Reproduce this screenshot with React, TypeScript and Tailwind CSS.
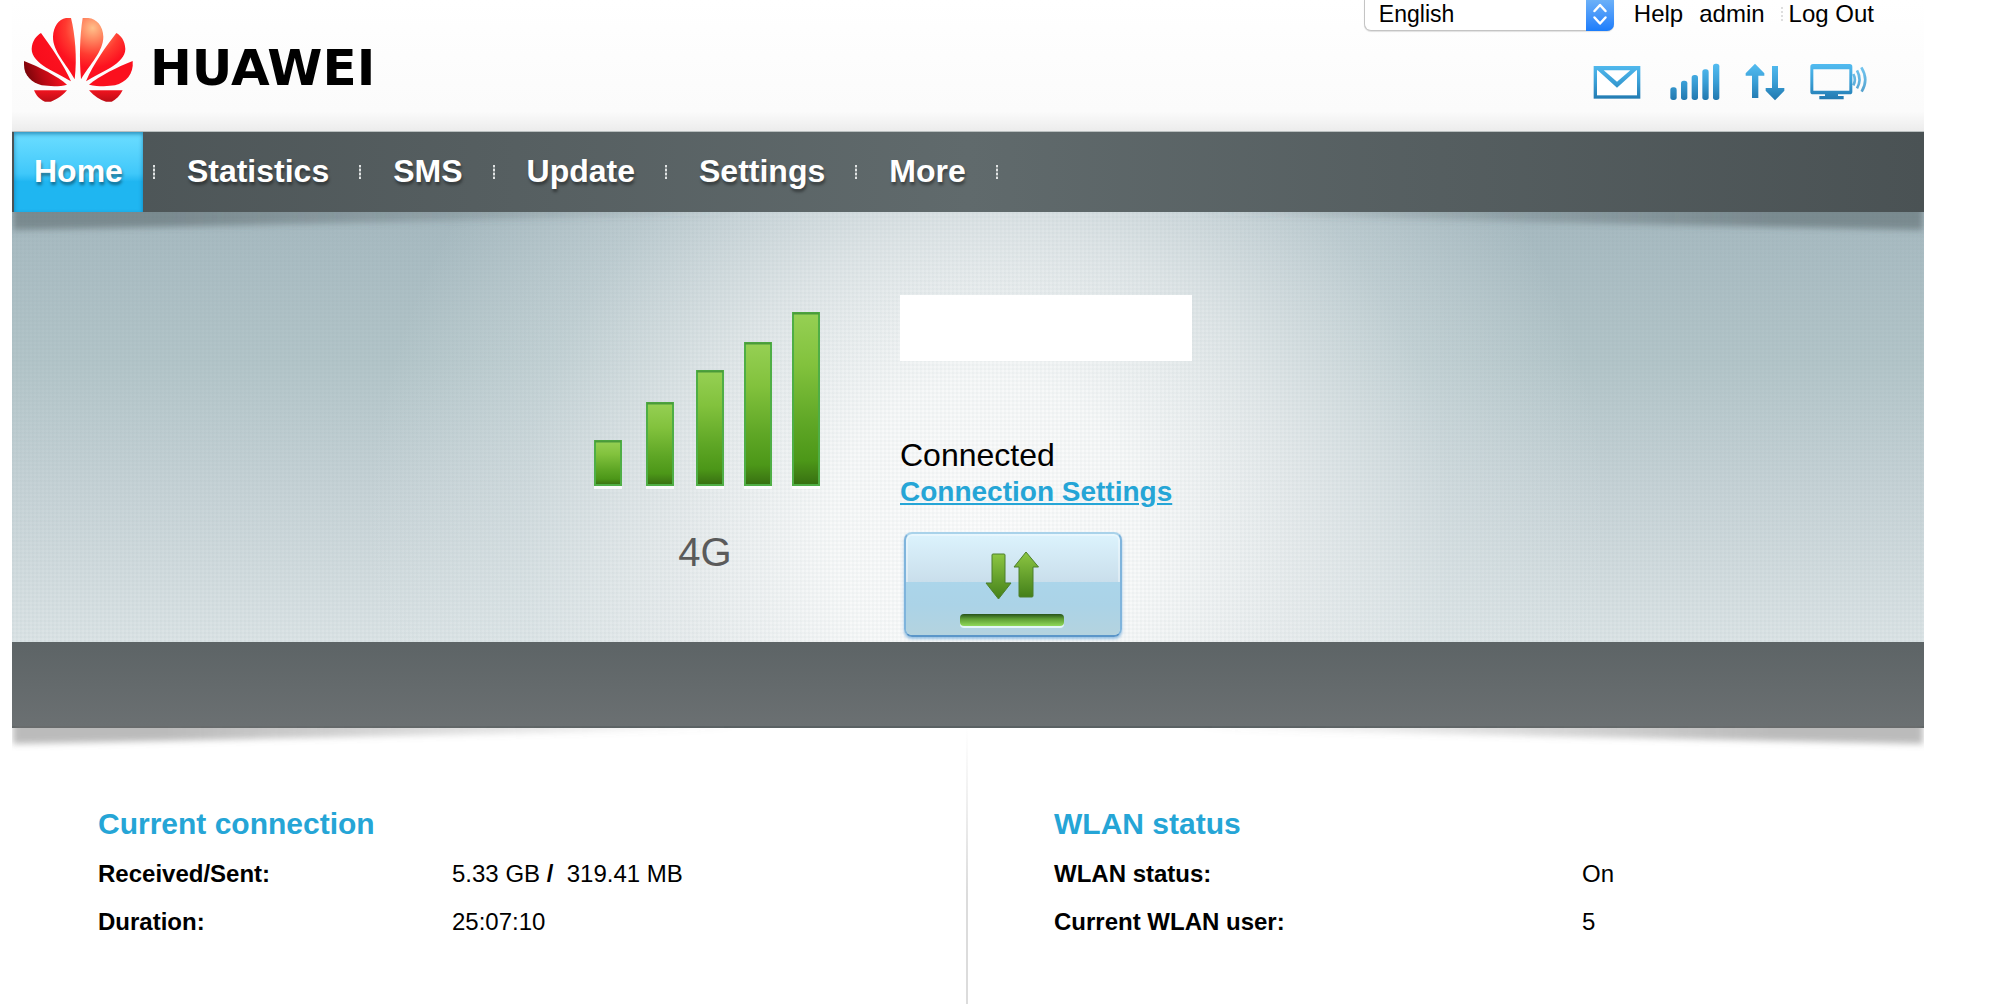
import { useState } from 'react'
import type { ReactNode } from 'react'

const TABS = ['Home', 'Statistics', 'SMS', 'Update', 'Settings', 'More']

const LANGUAGES = ['English', 'Deutsch', 'Español', 'Français', 'Italiano']

const SIGNAL_BARS = [
  { x: 0, top: 128 },
  { x: 52, top: 90 },
  { x: 102, top: 58 },
  { x: 150, top: 30 },
  { x: 198, top: 0 },
]

interface StatusRow {
  label: string
  value: ReactNode
}

const CONNECTION_ROWS: StatusRow[] = [
  { label: 'Received/Sent:', value: <>5.33 GB <b>/&nbsp;</b> 319.41 MB</> },
  { label: 'Duration:', value: '25:07:10' },
]

const WLAN_ROWS: StatusRow[] = [
  { label: 'WLAN status:', value: 'On' },
  { label: 'Current WLAN user:', value: '5' },
]

function Logo() {
  return (
    <div className="flex items-start pl-3 pt-[18px]">
      <svg width="112" height="86" viewBox="12 12 336 258" aria-hidden="true">
        <defs>
          <radialGradient id="petals" gradientUnits="userSpaceOnUse" cx="218" cy="42" r="240">
            <stop offset="0" stopColor="#ffc08a" />
            <stop offset="0.14" stopColor="#ff8a63" />
            <stop offset="0.34" stopColor="#ff3a30" />
            <stop offset="0.5" stopColor="#fd1220" />
            <stop offset="0.8" stopColor="#f80d1c" />
            <stop offset="1" stopColor="#c90d18" />
          </radialGradient>
          <linearGradient id="petalDark" gradientUnits="userSpaceOnUse" x1="20" y1="215" x2="120" y2="180">
            <stop offset="0" stopColor="#6d0408" />
            <stop offset="0.5" stopColor="#b60913" />
            <stop offset="1" stopColor="#f0101d" />
          </linearGradient>
          <linearGradient id="petalLow" x1="0" y1="0" x2="0" y2="1">
            <stop offset="0" stopColor="#f0141f" />
            <stop offset="1" stopColor="#bd0d16" />
          </linearGradient>
        </defs>
        <g fill="url(#petals)">
          <path d="M138 12H153C165 60 172 130 164 196C140 150 98 112 99 68C100 38 116 16 138 12Z" />
          <path d="M188 12C179 70 178 130 183 196C210 150 250 112 250 68C249 36 230 14 205 12Z" />
          <path d="M63 57C92 97 130 150 153 202C110 175 35 150 35 105C36 80 50 65 63 57Z" />
          <path d="M289 57C258 97 220 150 198 202C240 175 316 150 316 105C315 80 303 65 289 57Z" />
        </g>
        <path fill="url(#petalDark)" d="M12 141C60 160 110 185 141 212C120 218 90 217 65 214C35 205 12 185 12 152Z" />
        <path fill="#fb101e" d="M338 141C290 160 240 185 207 212C235 218 265 217 285 214C318 205 342 180 338 141Z" />
        <path fill="url(#petalLow)" d="M42 229H141C125 248 105 258 92 263H75C58 256 48 244 42 229Z" />
        <path fill="url(#petalLow)" d="M207 229H308C300 245 288 257 275 263H258C240 258 222 246 207 229Z" />
      </svg>
      <span className="ml-[14px] mt-[22px] font-['DejaVu_Sans',sans-serif] text-[50px] leading-14 font-bold text-black">HUAWEI</span>
    </div>
  )
}

function StatusIcons() {
  return (
    <div className="mt-8 flex items-center justify-end gap-6 pr-[5px]">
      <svg className="mr-1" width="48" height="38" viewBox="24 24 144 114" role="img" aria-label="Messages">
        <defs>
          <linearGradient id="iconBlue" gradientUnits="userSpaceOnUse" x1="0" y1="28" x2="0" y2="134">
            <stop offset="0" stopColor="#52bbf0" />
            <stop offset="0.5" stopColor="#3a9fd6" />
            <stop offset="1" stopColor="#2179b0" />
          </linearGradient>
        </defs>
        <rect x="31" y="38" width="130" height="88" fill="#fff" stroke="url(#iconBlue)" strokeWidth="10" />
        <path d="M32 36H160V46H154L96 98L38 46H32Z" fill="url(#iconBlue)" />
        <path d="M56 46H136L96 80Z" fill="#fff" />
      </svg>
      <svg width="52" height="38" viewBox="256 24 156 114" role="img" aria-label="Signal strength">
        <g fill="url(#iconBlue)">
          <rect x="260" y="97" width="19" height="38" rx="8" />
          <rect x="292" y="77" width="19" height="58" rx="8" />
          <rect x="324" y="60" width="19" height="75" rx="8" />
          <rect x="356" y="43" width="19" height="92" rx="8" />
          <rect x="388" y="26" width="19" height="109" rx="8" />
        </g>
      </svg>
      <svg width="40" height="38" viewBox="480 24 120 114" role="img" aria-label="Data transfer">
        <g fill="url(#iconBlue)">
          <path d="M510 26L538 55V62H520V129H501V62H482V55Z" />
          <path d="M570 136L542 107V99H561V33H579V99H598V107Z" />
        </g>
      </svg>
      <svg width="60" height="38" viewBox="670 24 180 114" role="img" aria-label="Connected devices">
        <path fill="url(#iconBlue)" fillRule="evenodd" d="M682 27H792Q800 27 800 35V110Q800 118 792 118H757V123H774V133H701V123H718V118H682Q674 118 674 110V35Q674 27 682 27ZM683 43V107H791V43Z" />
        <g fill="none" stroke="url(#iconBlue)" strokeWidth="8" opacity="0.8">
          <path d="M803 57Q812 74 803 91" />
          <path d="M814 46Q829 74 814 100" />
          <path d="M827 37Q850 74 828 110" />
        </g>
      </svg>
    </div>
  )
}

function Header() {
  const [language, setLanguage] = useState('English')
  return (
    <header className="flex h-[132px] justify-between border-b border-[#b9bfbf] bg-linear-to-b from-white via-[#fbfbfb] via-85% to-[#ececec]">
      <Logo />
      <div className="pr-[50px]">
        <div className="flex items-start justify-end text-2xl leading-7 text-black">
          <div className="relative mr-5">
            <select
              aria-label="Language"
              value={language}
              onChange={e => setLanguage(e.target.value)}
              className="block h-[31px] w-[250px] appearance-none rounded-b-[7px] border border-t-0 border-[#c4c4c4] bg-white pb-0.5 pl-3.5 text-[23px] leading-7 shadow-[0_1px_1px_rgba(0,0,0,0.12)]"
            >
              {LANGUAGES.map(l => <option key={l}>{l}</option>)}
            </select>
            <span className="pointer-events-none absolute inset-y-0 right-0 w-7 rounded-br-[7px] bg-linear-to-b from-[#6bb0f8] to-[#1a7cfb]">
              <svg width="28" height="31" viewBox="0 0 28 31" fill="none" stroke="#fff" strokeWidth="2.5" strokeLinecap="round" strokeLinejoin="round">
                <path d="M8.500 11L14 5L19.500 11M8.500 17.500L14 23.500L19.500 17.500" />
              </svg>
            </span>
          </div>
          <a href="#help">Help</a>
          <a href="#account" className="ml-4">admin</a>
          <span className="mt-[7px] ml-4 h-[14px] w-0 border-l-2 border-dotted border-[#dedede]" />
          <a href="#logout" className="ml-[6px]">Log Out</a>
        </div>
        <StatusIcons />
      </div>
    </header>
  )
}

// Soft wedges that make the bar above look lifted at both ends
function LiftedShadow({ id, color }: { id: string; color: string }) {
  return (
    <svg className="pointer-events-none absolute inset-x-0 top-full h-7 w-full" viewBox="0 0 1912 28" preserveAspectRatio="none" aria-hidden="true">
      <defs>
        <filter id={id} x="-5%" y="-50%" width="110%" height="200%">
          <feGaussianBlur stdDeviation="3" />
        </filter>
        <linearGradient id={id + 'Fade'} x1="0" y1="0" x2="1" y2="0">
          <stop offset="0" stopColor={color} />
          <stop offset="0.08" stopColor={color} />
          <stop offset="0.38" stopColor={color} stopOpacity="0" />
          <stop offset="0.62" stopColor={color} stopOpacity="0" />
          <stop offset="0.92" stopColor={color} />
          <stop offset="1" stopColor={color} />
        </linearGradient>
      </defs>
      <path d="M1 -10H1911V18L1150 2H762L1 18Z" fill={`url(#${id}Fade)`} filter={`url(#${id})`} />
    </svg>
  )
}

function NavBar() {
  const [active, setActive] = useState('Home')
  return (
    <nav className="relative z-10 flex h-20 items-stretch bg-linear-to-r from-[#4b5355] via-[#606a6c] to-[#4a5254] pl-0.5">
      {TABS.map(tab => (
        <div key={tab} className="flex items-center">
          <button
            onClick={() => setActive(tab)}
            className={`h-full px-5 pb-0.5 text-[32px] leading-9 font-bold text-white [text-shadow:1px_3px_3px_rgba(0,0,0,0.4)] ${tab === active ? 'bg-linear-to-b from-[#68dcff] from-5% via-[#3fc8fa] via-52% to-[#1fb6f1] to-62% shadow-[inset_0_2px_4px_rgba(0,90,140,0.6)]' : ''}`}
          >
            {tab}
          </button>
          <span className="mr-3 ml-2.5 h-[14px] w-0.5 bg-[repeating-linear-gradient(to_bottom,#e0e3e3_0_2px,#8f9697_2px_4px)]" />
        </div>
      ))}
      <LiftedShadow id="navShadow" color="rgba(80,92,96,0.5)" />
    </nav>
  )
}

function SignalChart() {
  return (
    <svg width="226" height="178" viewBox="0 0 226 178" role="img" aria-label="Signal: 5 of 5 bars">
      <defs>
        <linearGradient id="barGreen" x1="0" y1="0" x2="0" y2="1">
          <stop offset="0" stopColor="#96d054" />
          <stop offset="0.3" stopColor="#82c23d" />
          <stop offset="0.65" stopColor="#5ea625" />
          <stop offset="0.86" stopColor="#4c9718" />
          <stop offset="0.95" stopColor="#3f7d14" />
          <stop offset="1" stopColor="#357010" />
        </linearGradient>
      </defs>
      {SIGNAL_BARS.map(bar => (
        <g key={bar.x}>
          <rect x={bar.x} y={174} width="28" height="3" fill="#fff" opacity="0.8" />
          <rect x={bar.x + 1} y={bar.top + 1} width="26" height={172 - bar.top} fill="url(#barGreen)" stroke="#4fae45" strokeWidth="2" />
          <path d={`M${bar.x + 1} ${bar.top + 1.5}h26`} stroke="#4a9a3a" strokeWidth="2" />
        </g>
      ))}
    </svg>
  )
}

function ConnectButton() {
  return (
    <button
      aria-label="Disconnect"
      className="mt-[21px] ml-1 flex h-[105px] w-[218px] justify-center rounded-lg border-2 border-[#7fb4dc] border-t-[#a9d2ea] border-b-[#5b96c9] bg-linear-to-b from-[#dcf3fd] via-[#c9deeb] via-48% to-[#b3d3e1] shadow-[0_2px_3px_rgba(110,170,220,0.7),inset_0_0_0_2px_rgba(255,255,255,0.35)]"
    >
      <span className="flex size-full justify-center rounded-md bg-[linear-gradient(to_bottom,transparent_48%,#abd5ea_48%,#abd3e7_70%,#b4d3df)] pr-1">
        <svg width="106" height="101" viewBox="0 0 106 101" aria-hidden="true">
          <defs>
            <linearGradient id="arrowGreen" x1="0" y1="0" x2="0" y2="1">
              <stop offset="0" stopColor="#8cc642" />
              <stop offset="1" stopColor="#44801a" />
            </linearGradient>
            <linearGradient id="trayGreen" x1="0" y1="0" x2="0" y2="1">
              <stop offset="0" stopColor="#27521a" />
              <stop offset="0.4" stopColor="#5c9c34" />
              <stop offset="1" stopColor="#90d95a" />
            </linearGradient>
          </defs>
          <g fill="url(#arrowGreen)" stroke="#4c7f2c" strokeWidth="1" strokeLinejoin="round">
            <path d="M34 21Q34 20 35 20H46Q47 20 47 21V49H53L40.500 65L28 49H34Z" />
            <path d="M68 18L80.500 33H75V62Q75 63 74 63H62Q61 63 61 62V33H56Z" />
          </g>
          <rect x="2" y="82" width="104" height="12" rx="4" fill="#e3f5f8" />
          <rect x="2" y="80" width="104" height="12" rx="4" fill="url(#trayGreen)" />
        </svg>
      </span>
    </button>
  )
}

function Hero() {
  return (
    <section className="h-[430px] bg-[repeating-linear-gradient(to_right,rgba(120,145,150,0.04)_0_2px,transparent_2px_4px),repeating-linear-gradient(to_bottom,rgba(120,145,150,0.04)_0_2px,transparent_2px_4px),radial-gradient(ellipse_620px_620px_at_51%_75%,#fcfcfc_0%,rgba(249,250,250,0.97)_25%,rgba(237,240,241,0.78)_50%,rgba(226,233,235,0.36)_75%,rgba(220,228,230,0)_100%),linear-gradient(to_bottom,#a6b9c0,#b3c5c9_35%,#c7d3d7_65%,#dce4e6)]">
      <div className="flex justify-center gap-20">
        <div className="flex flex-col items-center pt-[100px]">
          <SignalChart />
          <p className="mt-[38px] pr-1 text-[40px] leading-[48px] text-[#5a5a5a]">4G</p>
        </div>
        <div className="w-[442px] pt-[83px]">
          <div className="h-[66px] w-[292px] bg-white" />
          <p className="mt-[76px] text-[32px] leading-9 text-black">Connected</p>
          <a href="#connection-settings" className="block text-[28px] leading-[38px] font-bold text-[#25a5d6] underline decoration-2 underline-offset-2">
            Connection Settings
          </a>
          <ConnectButton />
        </div>
      </div>
    </section>
  )
}

function StatusPanel({ title, rows, labelWidth }: { title: string; rows: StatusRow[]; labelWidth: string }) {
  return (
    <section className="px-[86px] pt-[78px]">
      <h2 className="text-[30px] leading-9 font-bold text-[#25a5d6]">{title}</h2>
      <dl className="mt-2 text-2xl leading-[48px] text-black">
        {rows.map(row => (
          <div key={row.label} className="flex">
            <dt className={`${labelWidth} shrink-0 font-bold`}>{row.label}</dt>
            <dd>{row.value}</dd>
          </div>
        ))}
      </dl>
    </section>
  )
}

export default function App() {
  return (
    <div className="min-h-screen bg-white pr-20 pl-3 font-['Liberation_Sans',Arial,sans-serif]">
      <div className="flex min-h-screen flex-col">
        <Header />
        <NavBar />
        <Hero />
        <div className="relative h-[86px] border-b-2 border-[#5a6163] bg-linear-to-b from-[#5d6466] to-[#6b7072]">
          <LiftedShadow id="footShadow" color="rgba(120,120,120,0.5)" />
        </div>
        <main className="grid grow grid-cols-2">
          <div className="border-r-2 [border-image:linear-gradient(to_bottom,#fff,#dcdcdc_60%)_1]">
            <StatusPanel title="Current connection" rows={CONNECTION_ROWS} labelWidth="w-[354px]" />
          </div>
          <StatusPanel title="WLAN status" rows={WLAN_ROWS} labelWidth="w-[528px]" />
        </main>
      </div>
    </div>
  )
}
